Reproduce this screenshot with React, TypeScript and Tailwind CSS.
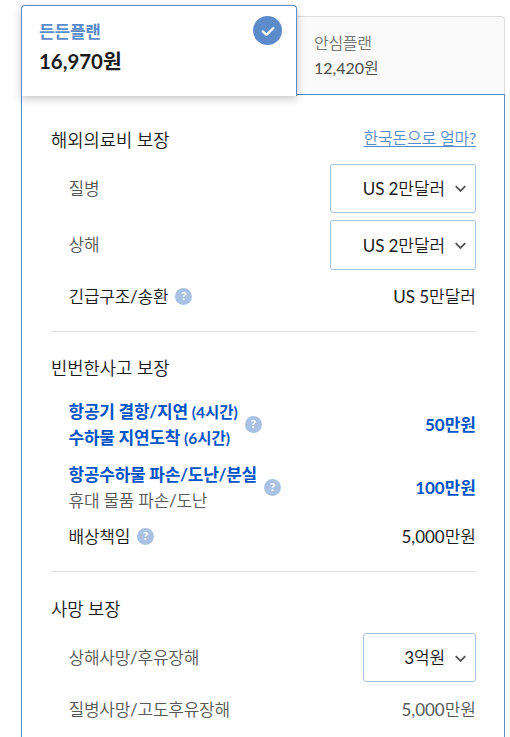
import type { ReactNode } from "react";

export default function App() {
  return (
    <div className="h-[737px] overflow-hidden bg-white pl-[21px] pr-[5px] pt-[5px] font-['Lato','Noto_Sans_CJK_KR_DemiLight','Noto_Sans_CJK_KR',sans-serif] text-[17px] text-[#1a1a1a]">
      <div className="flex h-[91px] items-end">
        <PlanTabActive name="든든플랜" price="16,970원" />
        <PlanTab name="안심플랜" price="12,420원" />
      </div>

      <main className="-mt-px h-[642px] border-x border-[#5b8bca] pl-[29px] pr-7">
        <section className="h-[237px] border-b border-[#dedede] pt-8">
          <div className="flex h-7 items-center justify-between">
            <h2 className="text-[17.7px]">해외의료비 보장</h2>
            <a
              href="#won"
              className="-mt-[7px] text-base tracking-[-0.2px] text-[#5b8bca] underline underline-offset-2"
            >
              한국돈으로 얼마?
            </a>
          </div>
          <Row className="mt-[9px] h-[49px]" label={<Muted>질병</Muted>}>
            <SelectBox className="h-[49px] w-[146px]" value="US 2만달러" />
          </Row>
          <Row className="mt-[7px] h-[50px]" label={<Muted>상해</Muted>}>
            <SelectBox className="h-[50px] w-[146px] pt-px" value="US 2만달러" />
          </Row>
          <Row className="mt-3 h-[30px]" label="긴급구조/송환" help>
            US 5만달러
          </Row>
        </section>

        <section className="h-[240px] border-b border-[#dedede] pt-[23px]">
          <h2 className="text-[17.7px] leading-7">빈번한사고 보장</h2>
          <Row
            className="mt-4 h-[52px] font-['Lato','Noto_Sans_CJK_KR',sans-serif] font-bold text-[#0054c8]"
            label={
              <>
                항공기 결항/지연 <span className="text-[15.5px] tracking-normal">(4시간)</span>
                <br />
                수하물 지연도착 <span className="text-[15.5px] tracking-normal">(6시간)</span>
              </>
            }
            help
          >
            50만원
          </Row>
          <Row
            className="mt-[11px] h-[52px] font-['Lato','Noto_Sans_CJK_KR',sans-serif] font-bold text-[#0054c8]"
            label={
              <>
                항공수하물 파손/도난/분실
                <br />
                <span className="font-['Lato','Noto_Sans_CJK_KR_DemiLight','Noto_Sans_CJK_KR',sans-serif] font-normal">
                  <Muted>휴대 물품 파손/도난</Muted>
                </span>
              </>
            }
            help
          >
            100만원
          </Row>
          <Row className="mt-2 h-[30px]" label="배상책임" help>
            5,000만원
          </Row>
        </section>

        <section className="pt-6">
          <h2 className="text-[17.7px] leading-7">사망 보장</h2>
          <Row className="mt-[9px] h-[49px]" label={<Muted>상해사망/후유장해</Muted>}>
            <SelectBox className="h-[49px] w-[113px] pt-px" value="3억원" />
          </Row>
          <Row className="mt-[13px] h-[30px]" label={<Muted>질병사망/고도후유장해</Muted>}>
            <Muted>5,000만원</Muted>
          </Row>
        </section>
      </main>
    </div>
  );
}

function PlanTabActive({ name, price }: { name: string; price: string }) {
  return (
    <div className="relative z-10 flex h-[91px] w-[276px] justify-between rounded-t-[4px] border border-b-0 border-[#5b8bca] bg-white pl-[17px] pr-[14px] font-['Lato','Noto_Sans_CJK_KR',sans-serif] shadow-[0_3px_9px_rgba(0,0,0,0.22)]">
      <div className="pt-[12px] font-bold">
        <div className="text-[17px] leading-[28px] tracking-[-0.2px] text-[#5b8bca]">{name}</div>
        <div className="text-[20.4px] leading-[30px]">{price}</div>
      </div>
      <span className="mt-[10px] flex size-[29px] items-center justify-center rounded-full bg-[#5b8bca]">
        <svg width="14" height="12" viewBox="0 0 14 12" fill="none">
          <path
            d="M1.7 6.4 L5.5 9.9 L12.4 3"
            stroke="#fff"
            strokeWidth="2.3"
            strokeLinecap="round"
            strokeLinejoin="round"
          />
        </svg>
      </span>
    </div>
  );
}

function PlanTab({ name, price }: { name: string; price: string }) {
  return (
    <div className="mb-px h-[79px] flex-1">
      <div className="h-[78px] rounded-tr-[4px] border-r border-t border-[#dedede] bg-[#fafafa] pl-[17px] pt-[13px]">
        <div className="text-base leading-[26px] tracking-[-0.3px] text-[#757575]">{name}</div>
        <div className="text-base leading-6 text-[#4d4d4d]">{price}</div>
      </div>
      <div className="h-px bg-[#5b8bca]" />
    </div>
  );
}

function Row({
  label,
  help,
  className,
  children,
}: {
  label: ReactNode;
  help?: boolean;
  className: string;
  children: ReactNode;
}) {
  return (
    <div className={`flex items-center justify-between pl-[17.5px] ${className}`}>
      <div className="flex items-center gap-[7px]">
        <div className="leading-[26px] tracking-[-0.25px]">{label}</div>
        {help && <HelpIcon />}
      </div>
      <div>{children}</div>
    </div>
  );
}

function Muted({ children }: { children: ReactNode }) {
  return <span className="text-[#595959]">{children}</span>;
}

function SelectBox({ value, className }: { value: string; className: string }) {
  return (
    <button
      className={`flex items-center justify-end gap-[10px] rounded-[3px] border border-[#a9c1e2] bg-white pr-[9px] tracking-[-0.1px] ${className}`}
    >
      {value}
      <svg className="mt-px" width="11" height="8" viewBox="0 0 11 8" fill="none">
        <path d="M0.7 1.2 L5.5 6 L10.3 1.2" stroke="#555" strokeWidth="1.8" />
      </svg>
    </button>
  );
}

function HelpIcon() {
  return (
    <span className="-mt-[2px] flex size-[17px] items-center justify-center rounded-full bg-[#a9c1e2] text-[12px] font-black leading-none text-white">
      ?
    </span>
  );
}
